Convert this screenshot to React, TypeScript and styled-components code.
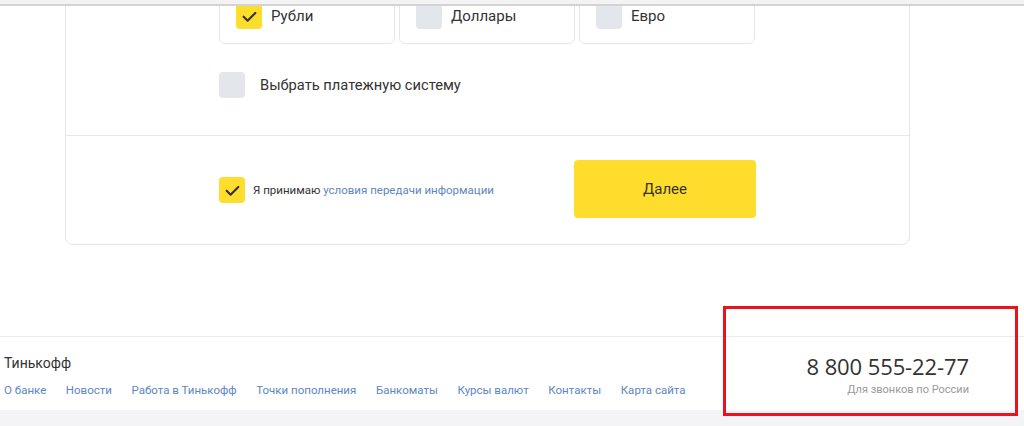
import React from "react";
import styled, { createGlobalStyle } from "styled-components";

const GlobalStyle = createGlobalStyle`
  html, body { margin: 0; padding: 0; background: #ffffff; }
  body {
    font-family: Roboto, "Liberation Sans", Arial, sans-serif;
    color: #333333;
    width: 1024px;
    height: 426px;
    overflow: hidden;
  }
  * { box-sizing: border-box; }
`;

const Page = styled.div`
  position: relative;
  width: 1024px;
  height: 426px;
  overflow: hidden;
`;

const TopBar = styled.div`
  position: absolute;
  top: 0;
  left: 0;
  right: 0;
  height: 6px;
  background: #f3f3f3;
  border-bottom: 2px solid #d3d3d3;
  z-index: 2;
`;

const Main = styled.main`
  margin-top: -37px;
  padding-left: 65px;
`;

const Card = styled.section`
  width: 845px;
  border: 1px solid #e6e6e6;
  border-radius: 8px;
  background: #fff;
`;

const TopSection = styled.div`
  padding: 24px 0 37px 153px;
  display: flex;
  flex-direction: column;
  gap: 27px;
`;

const CurrencyRow = styled.div`
  display: flex;
  gap: 4px;
`;

const CurrencyBox = styled.label`
  width: 176px;
  height: 56px;
  border: 1px solid #e6e6e6;
  border-radius: 6px;
  display: flex;
  align-items: center;
  gap: 9px;
  padding: 0 0 0 16px;
  font-size: 15px;
  color: #333;
`;

const Check = styled.span<{ $on?: boolean }>`
  flex: none;
  width: 26px;
  height: 26px;
  border-radius: 4px;
  background: ${(p) => (p.$on ? "#ffdd2d" : "#e3e6ea")};
  display: flex;
  align-items: center;
  justify-content: center;
`;

const OptionRow = styled.label`
  display: flex;
  align-items: center;
  gap: 15px;
  font-size: 14.7px;
  color: #333;
  padding-top: 1px;
`;

const Divider = styled.div`
  height: 1px;
  background: #e8e8e8;
`;

const BottomSection = styled.div`
  height: 108px;
  padding: 0 153px 0 153px;
  display: flex;
  align-items: center;
  justify-content: space-between;
`;

const Agree = styled.label`
  display: flex;
  align-items: center;
  gap: 8px;
  font-size: 11.5px;
  color: #333;
`;

const Link = styled.a<{ $size?: number }>`
  color: #5d86c2;
  text-decoration: none;
  font-size: ${(p) => p.$size ?? 11.5}px;
`;

const NextButton = styled.button`
  width: 182px;
  height: 58px;
  border: none;
  border-radius: 4px;
  background: #ffdd2d;
  color: #333;
  font-family: inherit;
  font-size: 15px;
  margin-top: -3px;
`;

const Footer = styled.footer`
  margin-top: 91px;
  border-top: 1px solid #ececec;
`;

const FooterInner = styled.div`
  display: flex;
  justify-content: space-between;
  padding: 17px 55px 12px 4px;
`;

const FooterLeft = styled.div`
  display: flex;
  flex-direction: column;
  gap: 10px;
`;

const Brand = styled.div`
  font-size: 14px;
  line-height: 18px;
  color: #333;
`;

const NavList = styled.nav`
  display: flex;
  gap: 19.6px;
  line-height: 16px;
`;

const FooterRight = styled.div`
  display: flex;
  flex-direction: column;
  align-items: flex-end;
  padding-top: 0;
  gap: 4px;
`;

const Phone = styled.div`
  font-family: "Open Sans", Roboto, sans-serif;
  font-size: 22px;
  line-height: 25px;
  color: #333;
  letter-spacing: -0.1px;
`;

const PhoneNote = styled.div`
  font-size: 11px;
  line-height: 14px;
  color: #9a9a9a;
`;

const GreyBand = styled.div`
  height: 16px;
  background: #f4f4f6;
`;

const Highlight = styled.div`
  position: absolute;
  left: 723px;
  top: 306px;
  width: 295px;
  height: 110px;
  border: 3px solid #e8131b;
  z-index: 3;
`;

const Tick = () => (
  <svg width="17" height="17" viewBox="0 0 16 16" fill="none">
    <path d="M2.5 8.2 L6.2 11.9 L13.5 4.6" stroke="#333" strokeWidth="2" strokeLinecap="round" strokeLinejoin="round" />
  </svg>
);

const currencies = [
  { name: "Рубли", on: true },
  { name: "Доллары", on: false },
  { name: "Евро", on: false },
];

const links = [
  "О банке",
  "Новости",
  "Работа в Тинькофф",
  "Точки пополнения",
  "Банкоматы",
  "Курсы валют",
  "Контакты",
  "Карта сайта",
];

export default function App() {
  return (
    <Page>
      <GlobalStyle />
      <TopBar />
      <Main>
        <Card>
          <TopSection>
            <CurrencyRow>
              {currencies.map((c) => (
                <CurrencyBox key={c.name}>
                  <Check $on={c.on}>{c.on && <Tick />}</Check>
                  {c.name}
                </CurrencyBox>
              ))}
            </CurrencyRow>
            <OptionRow>
              <Check />
              Выбрать платежную систему
            </OptionRow>
          </TopSection>
          <Divider />
          <BottomSection>
            <Agree>
              <Check $on>
                <Tick />
              </Check>
              <span>
                Я принимаю <Link href="#">условия передачи информации</Link>
              </span>
            </Agree>
            <NextButton>Далее</NextButton>
          </BottomSection>
        </Card>
      </Main>
      <Footer>
        <FooterInner>
          <FooterLeft>
            <Brand>Тинькофф</Brand>
            <NavList>
              {links.map((l) => (
                <Link key={l} href="#">
                  {l}
                </Link>
              ))}
            </NavList>
          </FooterLeft>
          <FooterRight>
            <Phone>8 800 555-22-77</Phone>
            <PhoneNote>Для звонков по России</PhoneNote>
          </FooterRight>
        </FooterInner>
        <GreyBand />
      </Footer>
      <Highlight />
    </Page>
  );
}
